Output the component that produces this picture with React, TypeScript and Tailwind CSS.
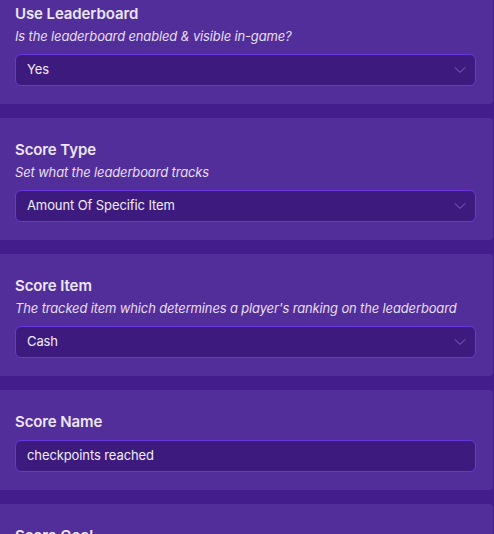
import { ChevronDown } from "lucide-react";

type Field = {
  title: string;
  desc?: string;
  value: string;
  kind: "select" | "text";
};

const fields: Field[] = [
  {
    title: "Use Leaderboard",
    desc: "Is the leaderboard enabled & visible in-game?",
    value: "Yes",
    kind: "select",
  },
  {
    title: "Score Type",
    desc: "Set what the leaderboard tracks",
    value: "Amount Of Specific Item",
    kind: "select",
  },
  {
    title: "Score Item",
    desc: "The tracked item which determines a player's ranking on the leaderboard",
    value: "Cash",
    kind: "select",
  },
  {
    title: "Score Name",
    value: "checkpoints reached",
    kind: "text",
  },
  {
    title: "Score Goal",
    desc: "Score needed to win",
    value: "10",
    kind: "text",
  },
];

const FieldCard = ({ field }: { field: Field }) => (
  <div className="w-[493px] rounded-r-[4px] bg-[#522e9a] pl-[15px] pr-[17px] pt-[20px] pb-[18px]">
    <div className="text-[15px] leading-[24px] font-semibold tracking-[-0.1px] text-[#ece6f7]">
      {field.title}
    </div>
    {field.desc && (
      <div className="text-[13px] leading-[20px] italic tracking-[-0.15px] text-[#e6def4]">
        {field.desc}
      </div>
    )}
    <div
      className={`flex h-[32px] items-center justify-between rounded-[6px] border border-[#6a36dc] bg-[#3d1b7e] pl-[11px] pr-[5px] ${
        field.desc ? "mt-[8px]" : "mt-[6px]"
      }`}
    >
      <span className="text-[13px] tracking-[-0.1px] text-[#f1ecfa]">
        {field.value}
      </span>
      {field.kind === "select" && (
        <ChevronDown size={20} strokeWidth={1.1} className="text-[#8b6dcc]" />
      )}
    </div>
  </div>
);

export default function App() {
  return (
    <div
      className="h-[534px] w-[494px] overflow-hidden bg-[#441d8c]"
      style={{ fontFamily: "Inter, 'Noto Sans', sans-serif" }}
    >
      <div className="-mt-[18px] flex flex-col gap-[14px]">
        {fields.map((f) => (
          <FieldCard key={f.title} field={f} />
        ))}
      </div>
    </div>
  );
}
